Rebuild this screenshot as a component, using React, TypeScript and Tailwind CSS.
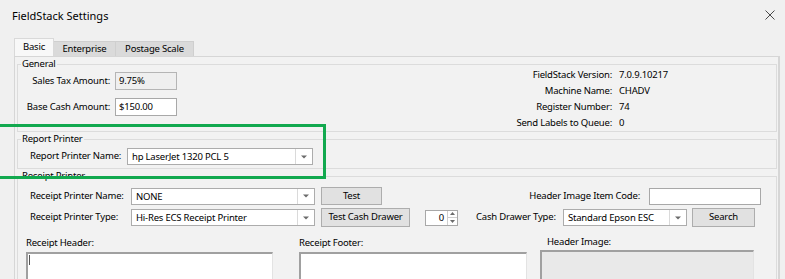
import type { ReactNode } from "react";

const ui =
  "font-['Noto_Sans',sans-serif] text-[9.5px] tracking-[-0.2px] whitespace-nowrap text-black";

function Arrow() {
  return (
    <svg width="6" height="4" viewBox="0 0 6 4" aria-hidden>
      <path d="M0 0.5h6L3 3.5z" fill="#6b6b6b" />
    </svg>
  );
}

function Combo({ className, value }: { className: string; value: string }) {
  return (
    <div className={`flex h-[17px] items-stretch border border-[#acacac] bg-white ${className}`}>
      <span className="flex-1 truncate pl-[4px] leading-[15px]">{value}</span>
      <span className="flex w-[17px] items-center justify-center border-l border-[#dadada]">
        <Arrow />
      </span>
    </div>
  );
}

function Button({ className, children }: { className: string; children: ReactNode }) {
  return (
    <div
      className={`flex h-[19px] items-center justify-center border border-[#adadad] bg-[#e1e1e1] ${className}`}
    >
      {children}
    </div>
  );
}

function Group({
  title,
  className,
  children,
}: {
  title: string;
  className: string;
  children: ReactNode;
}) {
  return (
    <fieldset className={`border border-[#dcdcdc] ${className}`}>
      <legend className="ml-[3px] px-[1px] leading-[14px]">{title}</legend>
      {children}
    </fieldset>
  );
}

function Inset({ className, children }: { className: string; children?: ReactNode }) {
  return (
    <div
      className={`h-[40px] border-l-2 border-t-2 border-r border-b border-l-[#a0a0a0] border-t-[#a0a0a0] border-r-[#e3e3e3] border-b-[#e3e3e3] ${className}`}
    >
      {children}
    </div>
  );
}

const info = [
  ["FieldStack Version:", "7.0.9.10217"],
  ["Machine Name:", "CHADV"],
  ["Register Number:", "74"],
  ["Send Labels to Queue:", "0"],
];

export default function App() {
  return (
    <div className={`relative h-[279px] w-[785px] overflow-hidden bg-[#f0f0f0] ${ui}`}>
      {/* title bar */}
      <div className="flex h-[30px] items-center justify-between pl-[12px] pr-[10px]">
        <span className="text-[11px] leading-none tracking-normal">FieldStack Settings</span>
        <svg width="10" height="10" viewBox="0 0 10 10" aria-hidden>
          <path d="M0.5 0.5l9 9M9.5 0.5l-9 9" stroke="#4a4a4a" strokeWidth="1" />
        </svg>
      </div>

      {/* tabs */}
      <div className="mt-[9px] flex h-[17px] items-end pl-[14px]">
        <div className="flex h-[18px] w-[40px] items-center justify-center border border-b-0 border-[#d9d9d9] bg-[#f8f8f8] pb-[1px]">
          Basic
        </div>
        <div className="flex h-[15px] w-[62px] items-center justify-center border-t border-r border-[#cfcfcf] bg-[#dadada]">
          Enterprise
        </div>
        <div className="flex h-[15px] w-[78px] items-center justify-center border-t border-r border-[#cfcfcf] bg-[#dadada]">
          Postage Scale
        </div>
      </div>

      {/* tab page */}
      <div className="ml-[14px] h-[240px] w-[766px] border-t border-l border-r-2 border-[#d6d6d6] bg-[#f2f2f2] pl-[2px] pr-[1px]">
        <Group title="General" className="h-[75px]">
          <div className="flex">
            <div className="mt-[1px] flex flex-col gap-[8px]">
              <div className="flex items-center">
                <span className="w-[97px] pr-[5px] text-right">Sales Tax Amount:</span>
                <div className="h-[18px] w-[62px] border border-[#b5b5b5] bg-[#efefef] pl-[3px] leading-[16px]">
                  9.75%
                </div>
              </div>
              <div className="flex items-center">
                <span className="w-[97px] pr-[5px] text-right">Base Cash Amount:</span>
                <div className="h-[18px] w-[62px] border border-[#a8a8a8] bg-white pl-[3px] leading-[16px]">
                  $150.00
                </div>
              </div>
            </div>
            <div className="ml-[335px] -mt-[4px] grid grid-cols-[100px_150px] gap-x-[7px]">
              {info.map(([k, v]) => (
                <div key={k} className="contents">
                  <span className="text-right leading-[16px]">{k}</span>
                  <span className="leading-[16px]">{v}</span>
                </div>
              ))}
            </div>
          </div>
        </Group>

        <Group title="Report Printer" className="h-[37px]">
          <div className="mt-[2px] flex items-center pl-[12px]">
            <span className="w-[97px]">Report Printer Name:</span>
            <Combo className="w-[186px]" value="hp LaserJet 1320 PCL 5" />
          </div>
        </Group>

        <Group title="Receipt Printer" className="h-[120px]">
          <div className="mt-[4px] flex h-[18px] items-center pl-[12px]">
            <span className="w-[101px]">Receipt Printer Name:</span>
            <Combo className="w-[184px]" value="NONE" />
            <Button className="ml-[6px] !h-[18px] w-[61px]">Test</Button>
            <span className="w-[258px] text-right">Header Image Item Code:</span>
            <div className="ml-[9px] h-[17px] w-[112px] border border-[#a8a8a8] bg-white" />
          </div>

          <div className="mt-[3px] flex h-[19px] items-center pl-[12px]">
            <span className="w-[101px]">Receipt Printer Type:</span>
            <Combo className="w-[184px]" value="Hi-Res ECS Receipt Printer" />
            <Button className="ml-[6px] w-[89px]">Test Cash Drawer</Button>
            <div className="ml-[15px] flex h-[16px] w-[33px] border border-[#a8a8a8] bg-white">
              <span className="flex-1 pr-[3px] text-right leading-[14px]">0</span>
              <span className="flex w-[10px] flex-col border-l border-[#cfcfcf]">
                <span className="flex flex-1 items-center justify-center border-b border-[#cfcfcf]">
                  <svg width="5" height="3" viewBox="0 0 5 3" aria-hidden>
                    <path d="M0 3h5L2.5 0z" fill="#6b6b6b" />
                  </svg>
                </span>
                <span className="flex flex-1 items-center justify-center">
                  <svg width="5" height="3" viewBox="0 0 5 3" aria-hidden>
                    <path d="M0 0h5L2.5 3z" fill="#6b6b6b" />
                  </svg>
                </span>
              </span>
            </div>
            <span className="ml-[18px] w-[80px]">Cash Drawer Type:</span>
            <Combo className="ml-[7px] w-[124px]" value="Standard Epson ESC" />
            <Button className="ml-[5px] w-[63px]">Search</Button>
          </div>

          <div className="mt-[9px] flex pl-[8px]">
            <div className="w-[247px]">
              <div className="leading-[14px]">Receipt Header:</div>
              <Inset className="mt-[2px] bg-white pl-[1px] pt-[1px]">
                <div className="h-[10px] w-px bg-[#555]" />
              </Inset>
            </div>
            <div className="ml-[26px] w-[228px]">
              <div className="leading-[14px]">Receipt Footer:</div>
              <Inset className="mt-[2px] bg-white" />
            </div>
            <div className="ml-[13px] w-[214px]">
              <div className="-mt-[1px] pl-[7px] leading-[14px]">Header Image:</div>
              <Inset className="mt-[1px] bg-[#e9e9e9]" />
            </div>
          </div>
        </Group>
      </div>

      {/* highlight overlay */}
      <div className="pointer-events-none absolute left-[-10px] top-[124px] h-[55px] w-[336px] border-[3px] border-[#12a94f]" />
    </div>
  );
}
